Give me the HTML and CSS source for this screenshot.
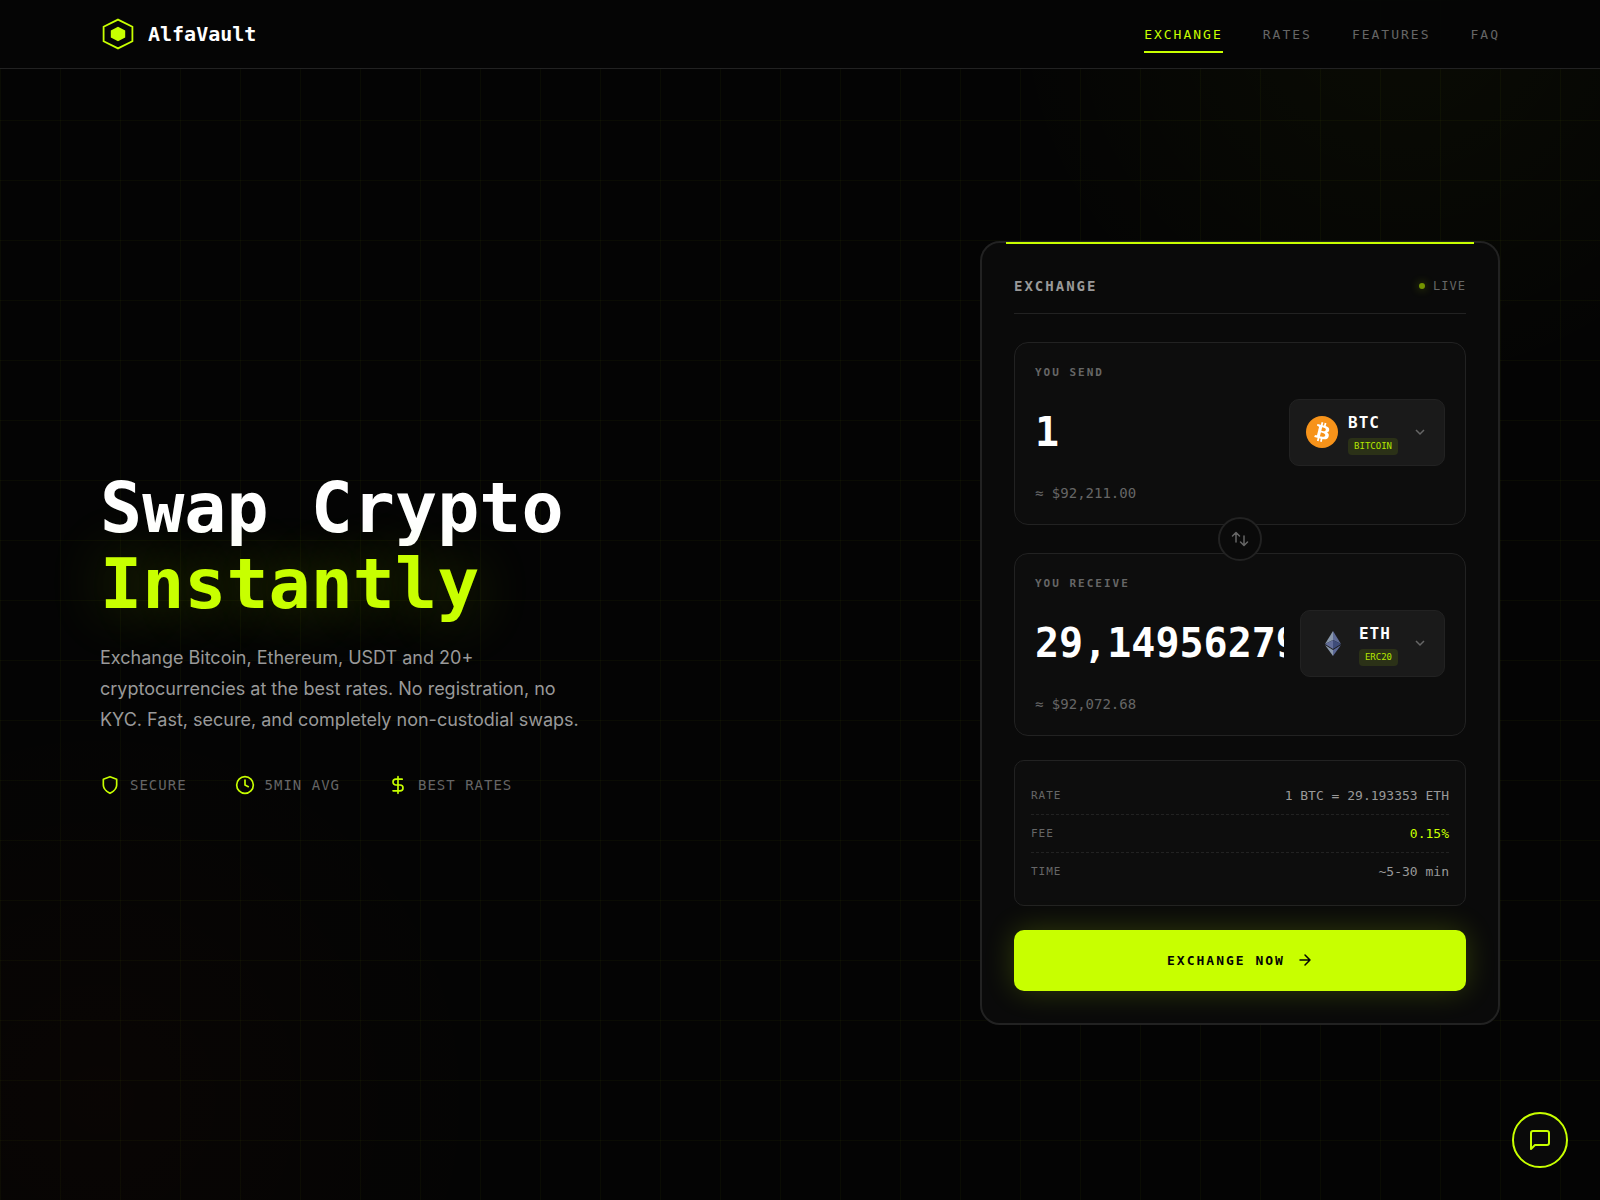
FILE: index.html
```
<!DOCTYPE html>
<html lang="en">

<head>
    <meta charset="UTF-8">
    <meta name="viewport" content="width=device-width, initial-scale=1.0">
    <title>AlfaVault</title>
    <link rel="stylesheet" href="styles.css">
</head>

<body>
    <header class="header">
        <a class="logo" href="#">
            <svg width="36" height="36" viewBox="0 0 40 40" fill="none">
                <path d="M20 4L36 12V28L20 36L4 28V12Z" stroke="#c8ff00" stroke-width="2"/>
                <path d="M20 12L28 16V24L20 28L12 24V16Z" fill="#c8ff00"/>
            </svg>
            <span>AlfaVault</span>
        </a>
        <nav class="nav">
            <a class="active" href="#exchange">EXCHANGE</a>
            <a href="#rates">RATES</a>
            <a href="#features">FEATURES</a>
            <a href="#faq">FAQ</a>
        </nav>
    </header>

    <main class="hero">
        <section class="intro">
            <h1>Swap Crypto<br><span class="accent">Instantly</span></h1>
            <p>Exchange Bitcoin, Ethereum, USDT and 20+ cryptocurrencies at the best rates. No registration, no KYC. Fast, secure, and completely non-custodial swaps.</p>
            <ul class="features">
                <li>
                    <svg class="icon" width="20" height="20" viewBox="0 0 24 24">
                        <path d="M12 22s8-4 8-10V5l-8-3-8 3v7c0 6 8 10 8 10z"/>
                    </svg>
                    SECURE
                </li>
                <li>
                    <svg class="icon" width="20" height="20" viewBox="0 0 24 24">
                        <circle cx="12" cy="12" r="10"/>
                        <path d="M12 6v6l4 2"/>
                    </svg>
                    5MIN AVG
                </li>
                <li>
                    <svg class="icon" width="20" height="20" viewBox="0 0 24 24">
                        <path d="M12 2v20M17 5H9.500a3.500 3.500 0 0 0 0 7h5a3.500 3.500 0 0 1 0 7H6"/>
                    </svg>
                    BEST RATES
                </li>
            </ul>
        </section>

        <form class="card" id="exchange">
            <div class="card-head">
                <h2>EXCHANGE</h2>
                <span class="live">LIVE</span>
            </div>

            <div class="field">
                <label class="field-label" for="send">YOU SEND</label>
                <div class="field-row">
                    <input class="amount" id="send" type="text" value="1">
                    <label class="token">
                        <svg width="32" height="32" viewBox="0 0 32 32">
                            <circle cx="16" cy="16" r="16" fill="#f7931a"/>
                            <path fill="#fff" d="M23.189 14.02c.314-2.096-1.283-3.223-3.465-3.975l.708-2.84-1.728-.43-.69 2.765c-.454-.114-.92-.22-1.385-.326l.695-2.783L15.596 6l-.708 2.839c-.376-.086-.746-.17-1.104-.26l.002-.009-2.384-.595-.46 1.846s1.283.294 1.256.312c.7.175.826.638.805 1.006l-.806 3.235c.048.012.11.03.18.057l-.183-.045-1.13 4.532c-.086.212-.303.531-.793.41.018.025-1.256-.313-1.256-.313l-.858 1.978 2.25.561c.418.105.828.215 1.231.318l-.715 2.872 1.727.43.708-2.84c.472.127.93.245 1.378.357l-.706 2.828 1.728.43.715-2.866c2.948.558 5.164.333 6.097-2.333.752-2.146-.037-3.385-1.588-4.192 1.13-.26 1.98-1.003 2.207-2.538zm-3.95 5.538c-.533 2.147-4.148.986-5.32.695l.95-3.805c1.172.293 4.929.872 4.37 3.11zm.535-5.569c-.487 1.953-3.495.96-4.47.717l.86-3.45c.975.243 4.118.696 3.61 2.733z"/>
                        </svg>
                        <span class="token-info">
                            <select aria-label="Send currency">
                                <option selected>BTC</option>
                                <option>ETH</option>
                            </select>
                            <span class="network">BITCOIN</span>
                        </span>
                        <svg class="chevron" width="16" height="16" viewBox="0 0 16 16">
                            <path d="M4 6l4 4 4-4"/>
                        </svg>
                    </label>
                </div>
                <div class="fiat">≈ $92,211.00</div>
            </div>

            <div class="swap">
                <button class="swap-btn" type="button" aria-label="Swap currencies">
                    <svg width="20" height="20" viewBox="0 0 20 20">
                        <path d="M6 13V4M2.500 7L6 3.500L9.500 7M14 7v9M10.500 13L14 16.500L17.500 13"/>
                    </svg>
                </button>
            </div>

            <div class="field">
                <label class="field-label" for="receive">YOU RECEIVE</label>
                <div class="field-row">
                    <input class="amount" id="receive" type="text" value="29,14956279" readonly>
                    <label class="token">
                        <svg width="32" height="32" viewBox="0 0 32 32">
                            <path fill="#8a98ab" d="M16 4v9L8 17z"/>
                            <path fill="#5f6b96" d="M16 4v9l8 4z"/>
                            <path fill="#626d99" d="M16 13v9l-8-5z"/>
                            <path fill="#3f4c7a" d="M16 13v9l8-5z"/>
                            <path fill="#8a98ab" d="M8 18l8 5v6z"/>
                            <path fill="#5a6694" d="M24 18l-8 5v6z"/>
                        </svg>
                        <span class="token-info">
                            <select aria-label="Receive currency">
                                <option>BTC</option>
                                <option selected>ETH</option>
                            </select>
                            <span class="network">ERC20</span>
                        </span>
                        <svg class="chevron" width="16" height="16" viewBox="0 0 16 16">
                            <path d="M4 6l4 4 4-4"/>
                        </svg>
                    </label>
                </div>
                <div class="fiat">≈ $92,072.68</div>
            </div>

            <dl class="info">
                <div>
                    <dt>RATE</dt>
                    <dd>1 BTC = 29.193353 ETH</dd>
                </div>
                <div>
                    <dt>FEE</dt>
                    <dd class="green">0.15%</dd>
                </div>
                <div>
                    <dt>TIME</dt>
                    <dd>~5-30 min</dd>
                </div>
            </dl>

            <button class="submit" type="submit">
                EXCHANGE NOW
                <svg width="16" height="16" viewBox="0 0 16 16">
                    <path d="M3 8h10M8 3l5 5-5 5"/>
                </svg>
            </button>
        </form>
    </main>

    <button class="chat" type="button" aria-label="Open chat">
        <svg class="icon" width="24" height="24" viewBox="0 0 24 24">
            <path d="M21 15a2 2 0 0 1-2 2H7l-4 4V5a2 2 0 0 1 2-2h14a2 2 0 0 1 2 2z"/>
        </svg>
    </button>
</body>

</html>
```

FILE: styles.css
```
* {
    box-sizing: border-box;
    margin: 0;
    padding: 0;
}

body {
    min-height: 100vh;
    display: flex;
    flex-direction: column;
    color: #fff;
    font-family: "DejaVu Sans Mono", "Liberation Mono", monospace;
    background-color: #040404;
    background-image:
        linear-gradient(rgba(200, 255, 0, 0.03) 1px, transparent 1px),
        linear-gradient(90deg, rgba(200, 255, 0, 0.03) 1px, transparent 1px),
        radial-gradient(circle 400px at calc(100% - 200px) 0, rgba(200, 255, 0, 0.03), transparent),
        radial-gradient(circle 400px at 100px calc(100% - 100px), rgba(255, 60, 0, 0.02), transparent);
    background-size: 60px 60px, 60px 60px, auto, auto;
}

a {
    color: inherit;
    text-decoration: none;
}

ul {
    list-style: none;
}

button,
input,
select {
    font-family: inherit;
    color: inherit;
    background: none;
    border: none;
    outline: none;
}

button {
    cursor: pointer;
}

.icon {
    fill: none;
    stroke: #c8ff00;
    stroke-width: 2;
    stroke-linecap: round;
    stroke-linejoin: round;
}

/* header */
.header {
    display: flex;
    justify-content: space-between;
    align-items: center;
    padding: 15px 100px;
    background: rgba(5, 5, 5, 0.95);
    border-bottom: 1px solid #222;
}

.logo {
    display: flex;
    align-items: center;
    gap: 12px;
    font-size: 20px;
    font-weight: bold;
}

.nav {
    display: flex;
    gap: 40px;
    font-size: 13px;
    line-height: 20px;
    letter-spacing: 2px;
    color: #666;
}

.nav a {
    padding: 10px 0 6px;
    border-bottom: 2px solid transparent;
}

.nav .active {
    color: #c8ff00;
    border-color: #c8ff00;
}

/* hero */
.hero {
    flex: 1;
    display: flex;
    justify-content: space-between;
    align-items: center;
    gap: 60px;
    padding: 60px 100px 64px;
}

.intro h1 {
    font-size: 70px;
    line-height: 76px;
    margin-bottom: 20px;
}

.accent {
    color: #c8ff00;
    text-shadow: 0 0 60px rgba(200, 255, 0, 0.3);
}

.intro p {
    max-width: 480px;
    margin-bottom: 40px;
    font-family: Inter, "Liberation Sans", sans-serif;
    font-size: 18px;
    line-height: 31px;
    color: #999;
}

.features {
    display: flex;
    gap: 48px;
}

.features li {
    display: flex;
    align-items: center;
    gap: 10px;
    font-size: 14px;
    line-height: 20px;
    letter-spacing: 1px;
    color: #666;
}

/* exchange card */
.card {
    position: relative;
    flex: 0 1 520px;
    min-width: 0;
    padding: 32px;
    background: #0a0a0a;
    border: 2px solid #222;
    border-radius: 20px;
}

.card::before {
    content: "";
    position: absolute;
    top: -1px;
    left: 24px;
    right: 24px;
    height: 2px;
    background: #c8ff00;
}

.card-head {
    display: flex;
    justify-content: space-between;
    align-items: center;
    padding-bottom: 16px;
    margin-bottom: 28px;
    border-bottom: 1px solid #222;
}

.card-head h2 {
    font-size: 14px;
    line-height: 22px;
    letter-spacing: 2px;
    color: #999;
}

.live {
    display: flex;
    align-items: center;
    gap: 8px;
    font-size: 12px;
    letter-spacing: 1px;
    color: #666;
}

.live::before {
    content: "";
    width: 6px;
    height: 6px;
    border-radius: 50%;
    background: #749400;
    box-shadow: 0 0 10px rgba(200, 255, 0, 0.4);
}

.field {
    padding: 20px;
    background: #0d0d0d;
    border: 1px solid #222;
    border-radius: 14px;
}

.field-label {
    display: block;
    margin-bottom: 16px;
    font-size: 11px;
    font-weight: bold;
    line-height: 20px;
    letter-spacing: 2px;
    color: #666;
}

.field-row {
    display: flex;
    align-items: center;
    gap: 16px;
}

.amount {
    flex: 1;
    width: 100%;
    min-width: 0;
    font-size: 40px;
    font-weight: bold;
}

.token {
    display: flex;
    align-items: center;
    gap: 10px;
    padding: 10px 16px;
    background: #1a1a1a;
    border: 1px solid #222;
    border-radius: 10px;
    cursor: pointer;
}

.token-info {
    display: flex;
    flex-direction: column;
    align-items: flex-start;
    gap: 2px;
}

.token select {
    appearance: none;
    height: 26px;
    font-size: 16px;
    font-weight: bold;
    letter-spacing: 1px;
    cursor: pointer;
}

.network {
    padding: 0 6px;
    font-size: 9px;
    line-height: 17px;
    color: #b4e600;
    background: rgba(200, 255, 0, 0.1);
    border-radius: 4px;
}

.chevron {
    margin-left: 4px;
    fill: none;
    stroke: #666;
    stroke-width: 1.500;
}

.fiat {
    margin-top: 16px;
    font-size: 14px;
    line-height: 22px;
    color: #666;
}

/* round button overlaps both fields */
.swap {
    position: relative;
    display: flex;
    justify-content: center;
    margin: -8px 0;
}

.swap-btn {
    display: flex;
    align-items: center;
    justify-content: center;
    width: 44px;
    height: 44px;
    background: #0a0a0a;
    border: 2px solid #222;
    border-radius: 50%;
}

.swap-btn svg {
    fill: none;
    stroke: #666;
    stroke-width: 1.500;
    stroke-linecap: round;
    stroke-linejoin: round;
}

.info {
    margin: 24px 0;
    padding: 16px 16px 15px;
    background: #0d0d0d;
    border: 1px solid #222;
    border-radius: 10px;
}

.info div {
    display: flex;
    justify-content: space-between;
    align-items: center;
    padding: 8px 0;
    line-height: 21px;
    border-bottom: 1px dashed #222;
}

.info div:last-child {
    border-bottom: none;
}

.info dt {
    font-size: 11px;
    letter-spacing: 1px;
    color: #666;
}

.info dd {
    font-size: 13px;
    color: #999;
}

.info .green {
    color: #c8ff00;
}

.submit {
    display: flex;
    align-items: center;
    justify-content: center;
    gap: 12px;
    width: 100%;
    padding: 20px;
    font-size: 13px;
    font-weight: bold;
    line-height: 21px;
    letter-spacing: 2px;
    color: #050505;
    background: #c8ff00;
    border-radius: 10px;
    box-shadow: 0 0 30px rgba(200, 255, 0, 0.2);
}

.submit svg {
    fill: none;
    stroke: #050505;
    stroke-width: 1.500;
    stroke-linecap: round;
    stroke-linejoin: round;
}

.chat {
    position: fixed;
    right: 32px;
    bottom: 32px;
    display: flex;
    align-items: center;
    justify-content: center;
    width: 56px;
    height: 56px;
    background: #0a0a0a;
    border: 2px solid #c8ff00;
    border-radius: 50%;
}
```
